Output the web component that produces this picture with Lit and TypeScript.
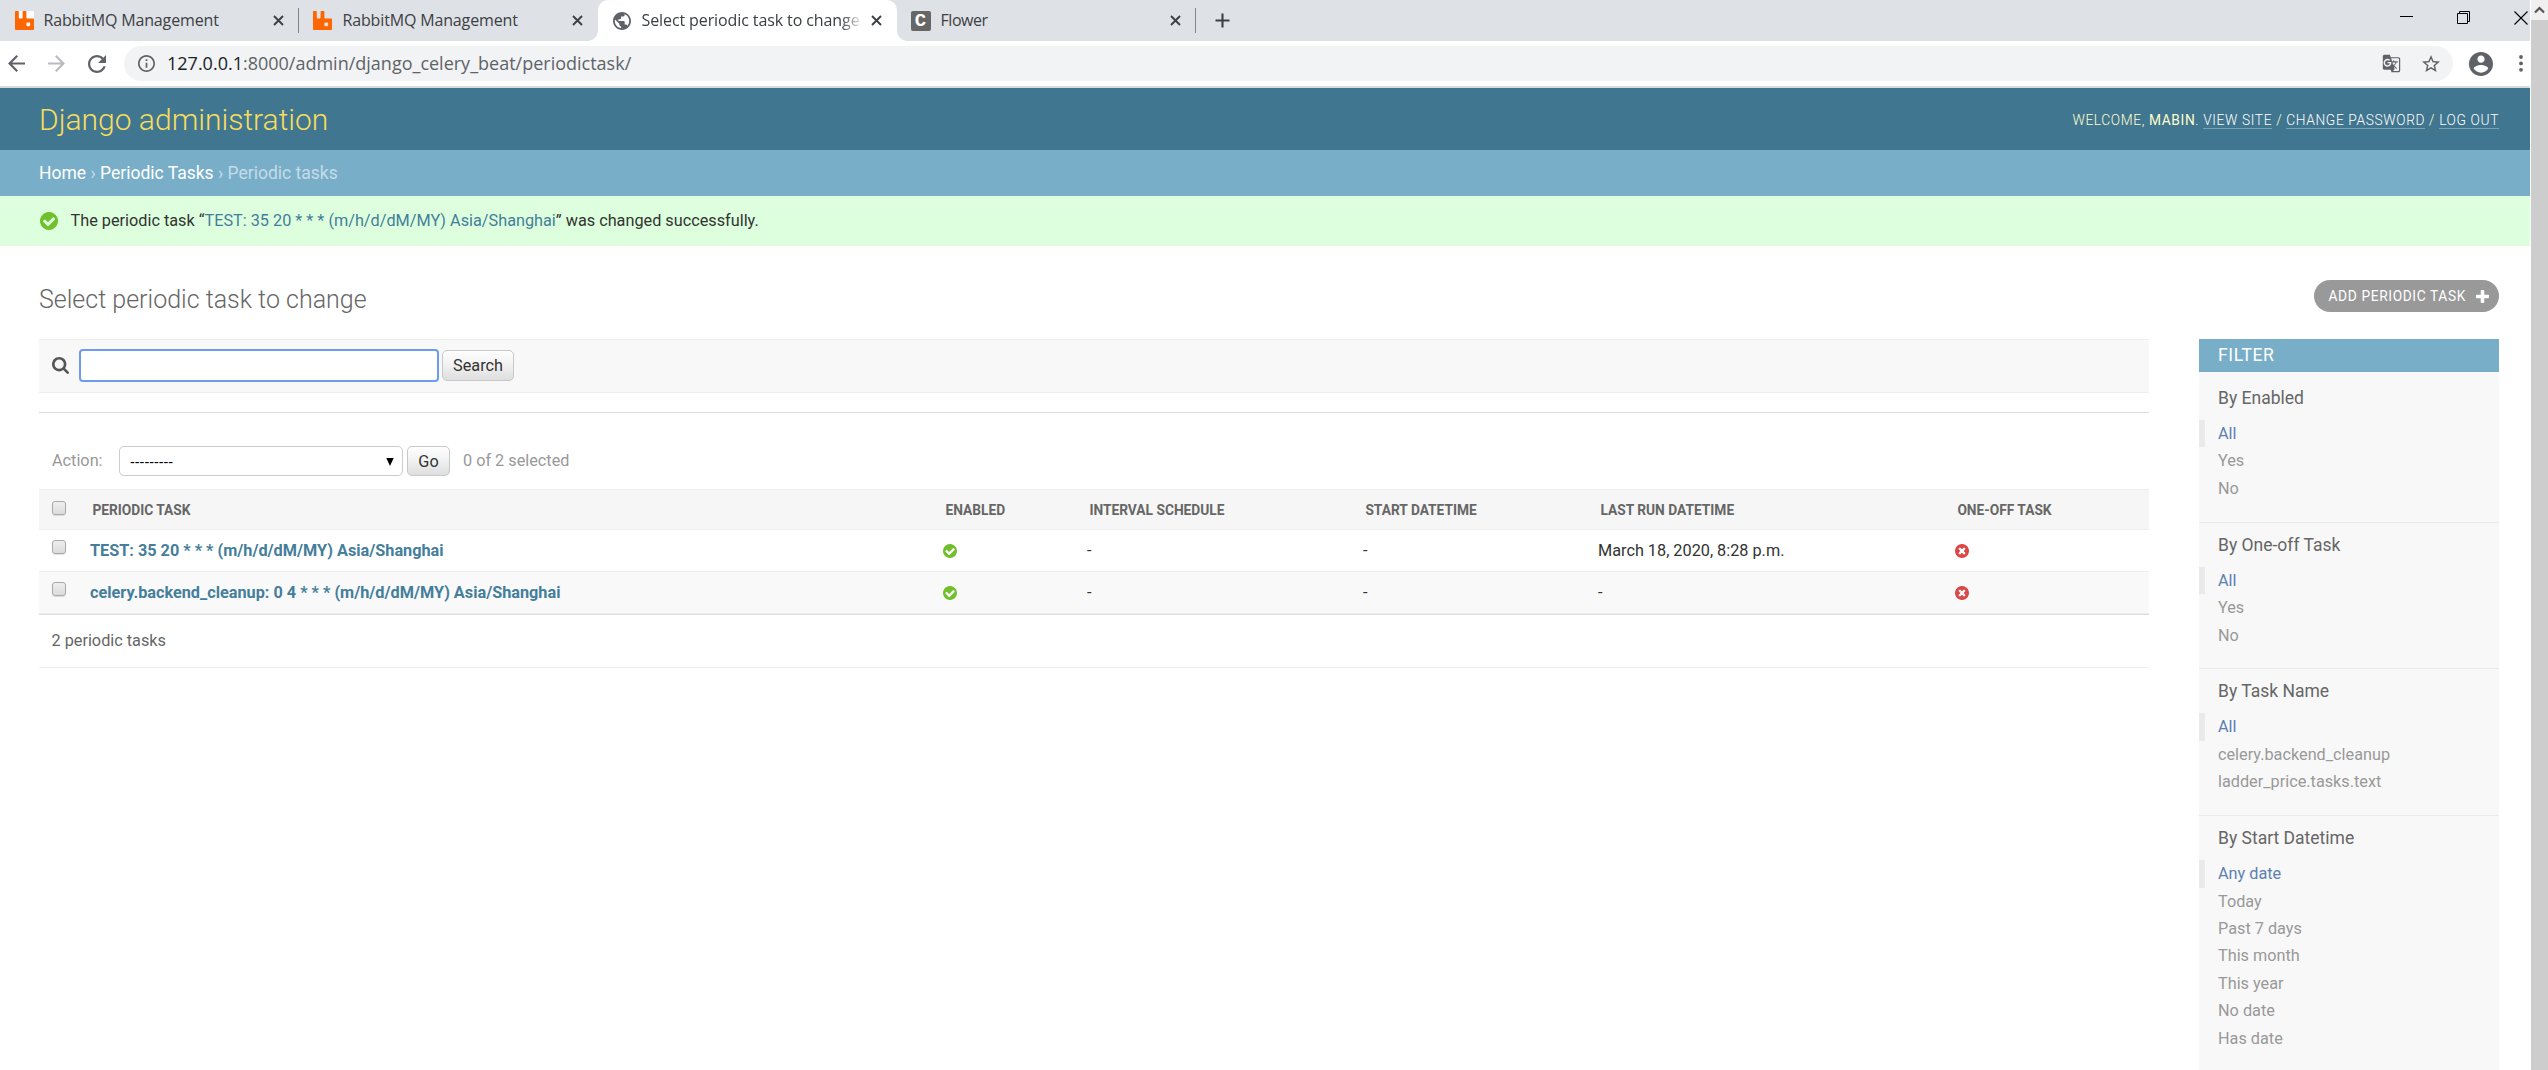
import { LitElement, html, css, svg, nothing } from "lit";
import { classMap } from "lit/directives/class-map.js";

const RABBIT =
  "M23.035 9.601h-7.677a.956.956 0 0 1-.962-.962V.962A.956.956 0 0 0 13.434 0H10.56a.956.956 0 0 0-.962.962V8.64a.956.956 0 0 1-.962.962H5.762a.956.956 0 0 1-.961-.962V.962A.956.956 0 0 0 3.839 0H.959a.956.956 0 0 0-.956.962v22.076A.956.956 0 0 0 .965 24h22.07a.956.956 0 0 0 .962-.962V10.58a.956.956 0 0 0-.962-.98zm-3.86 8.152a1.437 1.437 0 0 1-1.437 1.443h-1.924a1.437 1.437 0 0 1-1.436-1.443v-1.917a1.437 1.437 0 0 1 1.436-1.443h1.924a1.437 1.437 0 0 1 1.437 1.443z";
const GLOBE =
  "M12 2C6.48 2 2 6.48 2 12s4.48 10 10 10 10-4.48 10-10S17.52 2 12 2zm-1 17.93c-3.95-.49-7-3.85-7-7.93 0-.62.08-1.21.21-1.79L9 15v1c0 1.1.9 2 2 2v1.93zm6.9-2.54c-.26-.81-1-1.39-1.9-1.39h-1v-3c0-.55-.45-1-1-1H8v-2h2c.55 0 1-.45 1-1V7h2c1.1 0 2-.9 2-2v-.41c2.93 1.19 5 4.06 5 7.41 0 2.08-.8 3.97-2.1 5.39z";
const BACK = "M20 11H7.83l5.59-5.59L12 4l-8 8 8 8 1.41-1.41L7.83 13H20v-2z";
const FORWARD = "M12 4l-1.41 1.41L16.17 11H4v2h12.17l-5.58 5.59L12 20l8-8z";
const RELOAD =
  "M17.65 6.35C16.2 4.9 14.21 4 12 4c-4.42 0-7.99 3.58-7.99 8s3.57 8 7.99 8c3.73 0 6.84-2.55 7.73-6h-2.08c-.82 2.33-3.04 4-5.65 4-3.31 0-6-2.69-6-6s2.69-6 6-6c1.66 0 3.14.69 4.22 1.78L13 11h7V4l-2.35 2.35z";
const INFO =
  "M11 7h2v2h-2zm0 4h2v6h-2zm1-9C6.48 2 2 6.48 2 12s4.48 10 10 10 10-4.48 10-10S17.52 2 12 2zm0 18c-4.41 0-8-3.59-8-8s3.59-8 8-8 8 3.59 8 8-3.59 8-8 8z";
const TRANSLATE =
  "M21 4H11l-1-3H3c-1.1 0-2 .9-2 2v15c0 1.1.9 2 2 2h8l1 3h9c1.1 0 2-.9 2-2V6c0-1.1-.9-2-2-2zM7 16c-2.76 0-5-2.24-5-5s2.24-5 5-5c1.35 0 2.48.5 3.35 1.3L9.03 8.57c-.38-.36-1.04-.78-2.03-.78-1.74 0-3.15 1.44-3.15 3.21S5.26 14.21 7 14.21c2.01 0 2.84-1.44 2.92-2.41H7v-1.71h4.68c.07.31.12.61.12 1.02C11.8 13.97 9.89 16 7 16zm6.17-5.42h3.7c-.43 1.25-1.11 2.43-2.05 3.47-.31-.35-.6-.72-.86-1.1l-.79-2.37zm8.33 9.92c0 .55-.45 1-1 1H14l2-2.5-1.04-3.1 3.1 3.1.92-.92-3.3-3.25.02-.02c1.13-1.25 1.93-2.69 2.4-4.22H20v-1.3h-4.53V8h-1.29v1.29h-1.44L11.46 5.5h9.04c.55 0 1 .45 1 1v14z";
const STAR =
  "M22 9.24l-7.19-.62L12 2 9.19 8.63 2 9.24l5.46 4.73L5.82 21 12 17.27 18.18 21l-1.63-7.03L22 9.24zM12 15.4l-3.76 2.27 1-4.28-3.32-2.88 4.38-.38L12 6.1l1.71 4.04 4.38.38-3.32 2.88 1 4.28L12 15.4z";
const PERSON =
  "M12 2C6.48 2 2 6.48 2 12s4.48 10 10 10 10-4.48 10-10S17.52 2 12 2zm0 3c1.66 0 3 1.34 3 3s-1.34 3-3 3-3-1.34-3-3 1.34-3 3-3zm0 14.2c-2.5 0-4.71-1.28-6-3.22.03-1.99 4-3.08 6-3.08 1.99 0 5.97 1.09 6 3.08-1.29 1.94-3.5 3.22-6 3.22z";
const DISC =
  "q0 209-103 385.5t-279.5 279.5-385.5 103-385.5-103-279.5-279.5-103-385.5 103-385.5 279.5-279.5 385.5-103 385.5 103 279.5 279.5 103 385.5z";
const YES =
  "M1412 734q0-28-18-46l-91-90q-19-19-45-19t-45 19l-408 407-226-226q-19-19-45-19t-45 19l-91 90q-18 18-18 46 0 27 18 45l362 362q19 19 45 19 27 0 46-19l543-543q18-18 18-45zm252 162" + DISC;
const NO =
  "M1277 1122q0-26-19-45l-181-181 181-181q19-19 19-45 0-27-19-46l-90-90q-19-19-46-19-26 0-45 19l-181 181-181-181q-19-19-45-19-27 0-46 19l-90 90q-19 19-19 46 0 26 19 45l181 181-181 181q-19 19-19 45 0 27 19 46l90 90q19 19 46 19 26 0 45-19l181-181 181 181q19 19 45 19 27 0 46-19l90-90q19-19 19-46zm387-226" + DISC;
const SEARCH =
  "M1216 832q0-185-131.5-316.5t-316.5-131.5-316.5 131.5-131.5 316.5 131.5 316.5 316.5 131.5 316.5-131.5 131.5-316.5zm512 832q0 52-38 90t-90 38q-54 0-90-38l-343-342q-179 124-399 124-143 0-273.5-55.5t-225-150-150-225-55.5-273.5 55.5-273.5 150-225 225-150 273.5-55.5 273.5 55.5 225 150 150 225 55.5 273.5q0 220-124 399l343 343q37 37 37 90z";
const PLUS =
  "M1600 736v192q0 40-28 68t-68 28h-416v416q0 40-28 68t-68 28h-192q-40 0-68-28t-28-68v-416h-416q-40 0-68-28t-28-68v-192q0-40 28-68t68-28h416v-416q0-40 28-68t68-28h192q40 0 68 28t28 68v416h416q40 0 68 28t28 68z";

const icon = (d: string, size: number, color: string, box = "0 0 24 24") =>
  html`<svg class="icon" width=${size} height=${size} viewBox=${box}>${svg`<path d=${d} fill=${color}></path>`}</svg>`;
const DISC_BOX = "128 128 1536 1536";

class BrowserTabs extends LitElement {
  static styles = css`
    :host { display: flex; flex: none; height: 41px; background: #dee1e6; color: #3c4043; }
    .icon { display: block; flex: none; }
    .tab { display: flex; align-items: center; width: 284px; height: 41px; padding-left: 14.5px; position: relative; }
    .tab + .tab { padding-left: 14px; width: 285px; }
    .fav { display: flex; align-items: center; justify-content: center; width: 20px; height: 20px; flex: none; }
    .fav.blank { width: 19px; height: 19px; background: #fff; }
    .flower { width: 20px; height: 20px; border-radius: 2px; background: #666; color: #fff; font: 700 19px/20px "Liberation Mono", monospace; text-align: center; }
    .title { flex: none; width: 219px; margin-left: 10px; overflow: hidden; white-space: nowrap; font: 16px/39px "Open Sans", sans-serif; letter-spacing: -0.15px; }
    .tight { letter-spacing: -0.45px; }
    .close { flex: none; margin-left: 10.5px; }
    .active { background: #fff; border-radius: 10px 10px 0 0; z-index: 1; }
    .active::before, .active::after { content: ""; position: absolute; bottom: 0; width: 10px; height: 10px; }
    .active::before { left: -10px; background: radial-gradient(circle at 0 0, transparent 9.5px, #fff 10px); }
    .active::after { right: -10px; background: radial-gradient(circle at 100% 0, transparent 9.5px, #fff 10px); }
    .active .title { letter-spacing: -0.1px; -webkit-mask-image: linear-gradient(90deg, #000 91%, transparent 101%); }
    .sep::after { content: ""; position: absolute; right: 0; top: 8px; width: 1px; height: 25px; background: #80868b; }
    .new { align-self: center; margin-left: 19px; }
    .window { display: flex; margin-left: auto; align-items: center; padding: 0 2px 6px 0; gap: 44px; height: 35px; }
  `;

  private tab(kind: string, title: string) {
    return html`<div class=${classMap({ tab: true, active: kind === "globe", sep: kind === "rabbit-blank" || kind === "flower" })}>
      <div class=${classMap({ fav: true, blank: kind === "rabbit-blank" })}>
        ${kind.startsWith("rabbit") ? icon(RABBIT, 19, "#ff6600") : nothing}
        ${kind === "globe" ? icon(GLOBE, 18, "#5f6368", "2 2 20 20") : nothing}
        ${kind === "flower" ? html`<div class="flower">C</div>` : nothing}
      </div>
      <div class=${classMap({ title: true, tight: kind === "flower" })}>${title}</div>
      <svg class="icon close" width="11" height="11" viewBox="0 0 11 11"><path d="M1 1L10 10M10 1L1 10" stroke="#3c4043" stroke-width="1.9" /></svg>
    </div>`;
  }

  render() {
    return html`
      ${this.tab("rabbit-blank", "RabbitMQ Management")}
      ${this.tab("rabbit", "RabbitMQ Management")}
      ${this.tab("globe", "Select periodic task to change")}
      ${this.tab("flower", "Flower")}
      <svg class="icon new" width="15" height="15" viewBox="0 0 15 15"><path d="M7.5 0.5V14.5M0.5 7.5H14.5" stroke="#3c4043" stroke-width="2.1" /></svg>
      <div class="window">
        <svg class="icon" width="13" height="13" viewBox="0 0 13 13"><path d="M0 5.5H13" stroke="#000" /></svg>
        <svg class="icon" width="13" height="13" viewBox="0 0 13 13"><path d="M0.5 2.5H10.5V12.5H0.5ZM2.5 2.5V0.5H12.5V10.5H10.5" stroke="#000" fill="none" /></svg>
        <svg class="icon" width="14" height="14" viewBox="0 0 14 14"><path d="M0.5 0.5L13.5 13.5M13.5 0.5L0.5 13.5" stroke="#000" stroke-width="1.1" /></svg>
      </div>`;
  }
}
customElements.define("browser-tabs", BrowserTabs);

class BrowserToolbar extends LitElement {
  static styles = css`
    :host { display: flex; flex: none; align-items: center; height: 45px; border-bottom: 2px solid #d9dbde; background: #fff; }
    .icon { display: block; flex: none; }
    .nav { display: flex; align-items: center; gap: 23px; padding-left: 8px; width: 116px; box-sizing: content-box; }
    .omni { display: flex; align-items: center; flex: 1; height: 35px; border-radius: 17.5px; background: #f1f3f4; padding: 0 13px 0 14px; }
    .url { flex: 1; margin-left: 12px; font: 18px/33px "Open Sans", sans-serif; color: #5f6368; white-space: nowrap; }
    .host { color: #202124; }
    .star { margin-left: 21px; }
    .person { margin-left: 16px; }
    .dots { margin: 0 7px 0 26px; }
  `;

  render() {
    return html`
      <div class="nav">
        ${icon(BACK, 17, "#5f6368", "4 4 16 16")}
        ${icon(FORWARD, 17, "#b9bbbe", "4 4 16 16")}
        ${icon(RELOAD, 18, "#5f6368", "4 4 16 16")}
      </div>
      <div class="omni">
        ${icon(INFO, 17, "#5f6368", "2 2 20 20")}
        <div class="url"><span class="host">127.0.0.1</span>:8000/admin/django_celery_beat/periodictask/</div>
        ${icon(TRANSLATE, 19, "#5f6368")}
        <svg class="icon star" width="18" height="18" viewBox="2 2 20 20"><path d=${STAR} fill="#5f6368" /></svg>
      </div>
      <svg class="icon person" width="24" height="24" viewBox="2 2 20 20"><path d=${PERSON} fill="#5f6368" /></svg>
      <svg class="icon dots" width="4" height="17" viewBox="0 0 4 17"><g fill="#5f6368"><circle cx="2" cy="2" r="1.9" /><circle cx="2" cy="8.4" r="1.9" /><circle cx="2" cy="14.8" r="1.9" /></g></svg>`;
  }
}
customElements.define("browser-toolbar", BrowserToolbar);

interface Task { name: string; lastRun: string; }
const TASKS: Task[] = [
  { name: "TEST: 35 20 * * * (m/h/d/dM/MY) Asia/Shanghai", lastRun: "March 18, 2020, 8:28 p.m." },
  { name: "celery.backend_cleanup: 0 4 * * * (m/h/d/dM/MY) Asia/Shanghai", lastRun: "-" },
];
const COLUMNS = ["Periodic task", "Enabled", "Interval schedule", "Start datetime", "Last run datetime", "One-off task"];

class ChangeList extends LitElement {
  static styles = css`
    :host { display: block; width: 2110px; font: 16.25px/20px Roboto, sans-serif; color: #333; }
    .icon { display: block; flex: none; }
    .toolbar { display: flex; align-items: center; box-sizing: border-box; height: 54px; padding: 0 13px 1px; background: #f8f8f8; border-top: 1px solid #eee; border-bottom: 1px solid #eee; }
    .query { box-sizing: border-box; width: 360px; height: 33px; margin: 0 3px 0 10px; border: 2px solid #6b9cf0; border-radius: 4px; background: #fff; padding: 0; outline: none; }
    .button { box-sizing: border-box; border: 1px solid #c8c8c8; border-radius: 5px; background: linear-gradient(#fefefe, #f4f4f4 40%, #dedede); color: #333; text-align: center; font: 16.25px/29px Roboto, sans-serif; padding: 0; }
    .search { width: 72px; height: 31px; }
    .actions { display: flex; align-items: center; box-sizing: border-box; height: 77px; margin-top: 19px; border-top: 1px solid #ddd; padding: 20px 13px 0; color: #999; }
    .label { width: 67px; }
    .select { display: flex; align-items: center; justify-content: space-between; box-sizing: border-box; width: 284px; height: 30px; padding: 1px 8px 0 10px; border: 1px solid #ccc; border-radius: 5px; background: #fff; color: #000; font: 14.4px/28px "Liberation Sans", sans-serif; }
    .go { width: 43px; height: 30px; margin: 0 13px 0 4px; line-height: 27px; }
    .row { display: grid; grid-template-columns: 51px 853px 144px 276px 235px 357px 194px; align-items: center; box-sizing: border-box; height: 42px; border-bottom: 1px solid #eee; background: #fff; }
    .head { height: 41px; border-top: 1px solid #eee; background: #f6f6f6; color: #666; font-size: 13.75px; font-weight: 700; text-transform: uppercase; }
    .head span { padding-left: 2.4px; }
    .alt { background: #f9f9f9; }
    .check { box-sizing: border-box; width: 14px; height: 14px; margin: 0 0 7px 13px; border: 1px solid #a9a9a9; border-radius: 3px; background: linear-gradient(#eee, #dcdcdc); box-shadow: 0 1px 1px rgba(0, 0, 0, 0.12); }
    .head .check { margin-bottom: 4px; }
    .name { color: #447e9b; font-weight: 700; }
    .count { display: flex; align-items: center; box-sizing: border-box; height: 54px; padding-left: 12.5px; border-top: 1px solid #ddd; border-bottom: 1px solid #eee; color: #666; }
  `;

  render() {
    return html`
      <div class="toolbar">
        ${icon(SEARCH, 17, "#555", "64 128 1664 1664")}
        <input class="query" type="text" />
        <button class="button search">Search</button>
      </div>
      <div class="actions">
        <div class="label">Action:</div>
        <div class="select"><span>---------</span><svg class="icon" width="8" height="8" viewBox="0 0 8 8"><path d="M0.3 0H7.7L4 8Z" /></svg></div>
        <button class="button go">Go</button>
        <div>0 of 2 selected</div>
      </div>
      <div class="row head"><i class="check"></i>${COLUMNS.map((c) => html`<span>${c}</span>`)}</div>
      ${TASKS.map(
        (t, i) => html`<div class=${classMap({ row: true, alt: i % 2 === 1 })}>
          <i class="check"></i>
          <span class="name">${t.name}</span>
          ${icon(YES, 14, "#70bf2b", DISC_BOX)}
          <span>-</span>
          <span>-</span>
          <span>${t.lastRun}</span>
          ${icon(NO, 14, "#dd4646", DISC_BOX)}
        </div>`
      )}
      <div class="count">2 periodic tasks</div>`;
  }
}
customElements.define("change-list", ChangeList);

const FILTERS = [
  { title: "By Enabled", items: ["All", "Yes", "No"] },
  { title: "By One-off Task", items: ["All", "Yes", "No"] },
  { title: "By Task Name", items: ["All", "celery.backend_cleanup", "ladder_price.tasks.text"] },
  { title: "By Start Datetime", items: ["Any date", "Today", "Past 7 days", "This month", "This year", "No date", "Has date"] },
];

class FilterPanel extends LitElement {
  static styles = css`
    :host { display: block; width: 300px; background: #f8f8f8; font: 16.25px/27.4px Roboto, sans-serif; color: #999; }
    .head { height: 33px; padding-left: 19px; background: #79aec8; color: #fff; font-size: 17.5px; line-height: 33px; letter-spacing: 0.625px; font-weight: 400; margin-bottom: 4px; }
    .section { padding-bottom: 19.5px; border-bottom: 1px solid #eaeaea; }
    .title { padding-left: 19px; color: #666; font-size: 17.5px; line-height: 44px; }
    .item { padding-left: 19px; }
    .selected { border-left: 6px solid #eaeaea; padding-left: 13px; color: #5b80b2; }
  `;

  render() {
    return html`
      <div class="head">FILTER</div>
      ${FILTERS.map(
        (f) => html`<div class="section">
          <div class="title">${f.title}</div>
          ${f.items.map((t, i) => html`<div class=${classMap({ item: true, selected: i === 0 })}>${t}</div>`)}
        </div>`
      )}`;
  }
}
customElements.define("filter-panel", FilterPanel);

class AppRoot extends LitElement {
  static styles = css`
    :host { display: flex; width: 2548px; height: 1070px; overflow: hidden; background: #fff; font: 16.25px/20px Roboto, sans-serif; color: #333; }
    .icon { display: block; flex: none; }
    .page { display: flex; flex-direction: column; width: 2530px; flex: none; }
    .page > * { flex-shrink: 0; }
    .header { display: flex; justify-content: space-between; align-items: center; box-sizing: border-box; height: 62px; padding: 1px 31px 0 39px; background: #417690; }
    .brand { color: #f5dd5d; font-size: 30px; font-weight: 300; line-height: 40px; }
    .tools { color: #ffc; font-size: 13.75px; letter-spacing: 0.625px; font-weight: 300; white-space: nowrap; }
    .tools a { color: #fff; border-bottom: 1px solid rgba(255, 255, 255, 0.3); }
    .crumbs { box-sizing: border-box; height: 46px; padding: 1px 39px 0; background: #79aec8; color: #c4dce8; font-size: 17.5px; line-height: 45px; }
    .crumbs a { color: #fff; }
    .message { display: flex; align-items: center; height: 50px; padding: 0 40px; gap: 12.5px; background: #dfd; white-space: pre; }
    .message a { color: #447e9b; }
    .heading { display: flex; justify-content: space-between; align-items: center; box-sizing: border-box; height: 93px; padding: 7px 31px 0 39px; }
    .heading h1 { margin: 7px 0 0; font-size: 25px; line-height: 30px; font-weight: 300; color: #666; }
    .add { display: flex; align-items: center; justify-content: space-between; box-sizing: border-box; width: 185px; height: 32px; padding: 0 10px 0 14.5px; border-radius: 16px; background: #999; color: #fff; font-size: 13.75px; letter-spacing: 0.625px; font-weight: 400; }
    .body { display: flex; flex-grow: 1; align-items: stretch; justify-content: space-between; padding: 0 31px 0 39px; }
    .scroll { flex: 1; border-left: 1px solid #fff; background: #cdcdcd; }
    .up { display: flex; align-items: center; justify-content: center; height: 20px; background: #f0f0f0; }
  `;

  render() {
    return html`
      <div class="page">
        <browser-tabs></browser-tabs>
        <browser-toolbar></browser-toolbar>
        <div class="header">
          <div class="brand">Django administration</div>
          <div class="tools">WELCOME, <b>MABIN</b>. <a>VIEW SITE</a> / <a>CHANGE PASSWORD</a> / <a>LOG OUT</a></div>
        </div>
        <div class="crumbs"><a>Home</a> › <a>Periodic Tasks</a> › Periodic tasks</div>
        <div class="message">${icon(YES, 18, "#70bf2b", DISC_BOX)}<span>The periodic task “<a>TEST: 35 20 * * * (m/h/d/dM/MY) Asia/Shanghai</a>” was changed successfully.</span></div>
        <div class="heading">
          <h1>Select periodic task to change</h1>
          <div class="add">ADD PERIODIC TASK ${icon(PLUS, 13, "#fff", "192 128 1408 1408")}</div>
        </div>
        <div class="body"><change-list></change-list><filter-panel></filter-panel></div>
      </div>
      <div class="scroll">
        <div class="up"><svg class="icon" width="11" height="8" viewBox="0 0 11 8"><path d="M1 6.5L5.5 2L10 6.5" fill="none" stroke="#555" stroke-width="2.2" /></svg></div>
      </div>`;
  }
}
customElements.define("app-root", AppRoot);
